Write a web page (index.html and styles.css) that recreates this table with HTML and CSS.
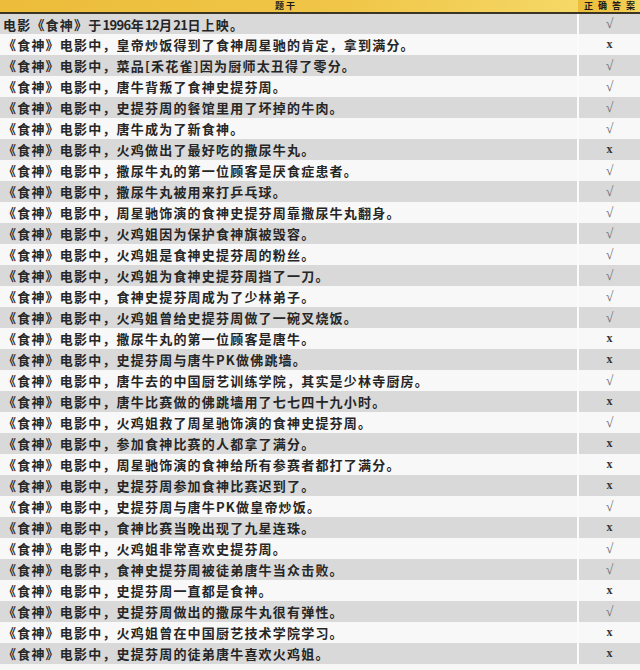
FILE: index.html
```html
<!DOCTYPE html>
<html lang="zh">
<head>
<meta charset="utf-8">
<link rel="stylesheet" href="styles.css">
</head>
<body>
<table class="quiz">
<thead>
<tr><th class="q">题干</th><th class="a">正确答案</th></tr>
</thead>
<tbody>
<tr><td class="q">电影《食神》于<span class="num">1996</span>年<span class="num">12</span>月<span class="num">21</span>日上映。</td><td class="a ok">√</td></tr>
<tr><td class="q">《食神》电影中，皇帝炒饭得到了食神周星驰的肯定，拿到满分。</td><td class="a no">x</td></tr>
<tr><td class="q">《食神》电影中，菜品[禾花雀]因为厨师太丑得了零分。</td><td class="a ok">√</td></tr>
<tr><td class="q">《食神》电影中，唐牛背叛了食神史提芬周。</td><td class="a ok">√</td></tr>
<tr><td class="q">《食神》电影中，史提芬周的餐馆里用了坏掉的牛肉。</td><td class="a ok">√</td></tr>
<tr><td class="q">《食神》电影中，唐牛成为了新食神。</td><td class="a ok">√</td></tr>
<tr><td class="q">《食神》电影中，火鸡做出了最好吃的撒尿牛丸。</td><td class="a no">x</td></tr>
<tr><td class="q">《食神》电影中，撒尿牛丸的第一位顾客是厌食症患者。</td><td class="a ok">√</td></tr>
<tr><td class="q">《食神》电影中，撒尿牛丸被用来打乒乓球。</td><td class="a ok">√</td></tr>
<tr><td class="q">《食神》电影中，周星驰饰演的食神史提芬周靠撒尿牛丸翻身。</td><td class="a ok">√</td></tr>
<tr><td class="q">《食神》电影中，火鸡姐因为保护食神旗被毁容。</td><td class="a ok">√</td></tr>
<tr><td class="q">《食神》电影中，火鸡姐是食神史提芬周的粉丝。</td><td class="a ok">√</td></tr>
<tr><td class="q">《食神》电影中，火鸡姐为食神史提芬周挡了一刀。</td><td class="a ok">√</td></tr>
<tr><td class="q">《食神》电影中，食神史提芬周成为了少林弟子。</td><td class="a ok">√</td></tr>
<tr><td class="q">《食神》电影中，火鸡姐曾给史提芬周做了一碗叉烧饭。</td><td class="a ok">√</td></tr>
<tr><td class="q">《食神》电影中，撒尿牛丸的第一位顾客是唐牛。</td><td class="a no">x</td></tr>
<tr><td class="q">《食神》电影中，史提芬周与唐牛PK做佛跳墙。</td><td class="a no">x</td></tr>
<tr><td class="q">《食神》电影中，唐牛去的中国厨艺训练学院，其实是少林寺厨房。</td><td class="a ok">√</td></tr>
<tr><td class="q">《食神》电影中，唐牛比赛做的佛跳墙用了七七四十九小时。</td><td class="a no">x</td></tr>
<tr><td class="q">《食神》电影中，火鸡姐救了周星驰饰演的食神史提芬周。</td><td class="a ok">√</td></tr>
<tr><td class="q">《食神》电影中，参加食神比赛的人都拿了满分。</td><td class="a no">x</td></tr>
<tr><td class="q">《食神》电影中，周星驰饰演的食神给所有参赛者都打了满分。</td><td class="a no">x</td></tr>
<tr><td class="q">《食神》电影中，史提芬周参加食神比赛迟到了。</td><td class="a no">x</td></tr>
<tr><td class="q">《食神》电影中，史提芬周与唐牛PK做皇帝炒饭。</td><td class="a ok">√</td></tr>
<tr><td class="q">《食神》电影中，食神比赛当晚出现了九星连珠。</td><td class="a no">x</td></tr>
<tr><td class="q">《食神》电影中，火鸡姐非常喜欢史提芬周。</td><td class="a ok">√</td></tr>
<tr><td class="q">《食神》电影中，食神史提芬周被徒弟唐牛当众击败。</td><td class="a ok">√</td></tr>
<tr><td class="q">《食神》电影中，史提芬周一直都是食神。</td><td class="a no">x</td></tr>
<tr><td class="q">《食神》电影中，史提芬周做出的撒尿牛丸很有弹性。</td><td class="a ok">√</td></tr>
<tr><td class="q">《食神》电影中，火鸡姐曾在中国厨艺技术学院学习。</td><td class="a no">x</td></tr>
<tr><td class="q">《食神》电影中，史提芬周的徒弟唐牛喜欢火鸡姐。</td><td class="a no">x</td></tr>
</tbody>
</table>
</body>
</html>
```

FILE: styles.css
```css
html, body {
  margin: 0;
  padding: 0;
  background: #f7f7f7;
}
.quiz {
  width: 640px;
  border-collapse: collapse;
  table-layout: fixed;
  font-family: "Noto Sans CJK SC", "Liberation Serif", serif;
}
.quiz th {
  height: 12px;
  padding: 0;
  font-size: 9px;
  line-height: 12px;
  font-weight: 700;
  color: #1a1a1a;
  background: linear-gradient(90deg, #ecbc3a 0%, #f0c648 60%, #f5d866 100%);
  border-bottom: 2px solid #3b3526;
  vertical-align: middle;
}
.quiz th.q {
  width: 572px;
  text-align: center;
  letter-spacing: 2px;
  padding-right: 6px;
}
.quiz th.a {
  text-align: right;
  letter-spacing: 5px;
  padding-right: 0;
}
.quiz td {
  height: 21px;
  padding: 0;
  box-sizing: border-box;
}
.quiz tbody tr:nth-child(odd) td {
  background: #d9d9d9;
}
.quiz tbody tr:nth-child(even) td {
  background: #f8f8f8;
}
.quiz td.q {
  padding-left: 3px;
  font-size: 13px;
  font-weight: 700;
  color: #262626;
  letter-spacing: 1.2px;
  white-space: nowrap;
  border-right: 2px solid #fbfbfb;
}
.quiz td.q .num {
  letter-spacing: -0.6px;
}
.quiz td.a {
  text-align: center;
  font-family: "Liberation Serif", serif;
  font-size: 14px;
}
.quiz td.ok {
  color: #707070;
}
.quiz td.no {
  color: #333333;
  font-weight: 700;
  font-size: 12px;
}
```
